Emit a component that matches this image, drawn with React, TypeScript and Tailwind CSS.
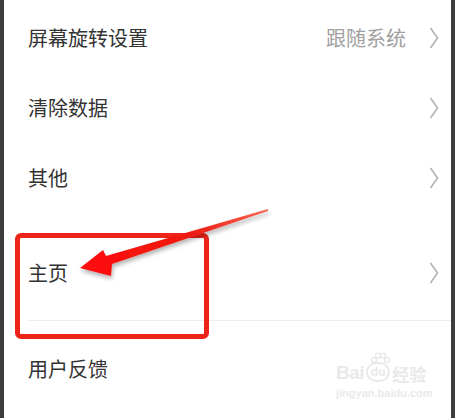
import React from 'react';

const font = { fontFamily: '"Noto Sans CJK SC", "Noto Sans", sans-serif' };

function Chevron() {
  return (
    <svg width="10" height="24" viewBox="0 0 10 24" className="shrink-0">
      <polyline points="1.5,2 8.5,12 1.5,22" fill="none" stroke="#b8b8b8" strokeWidth="1.8" strokeLinejoin="miter" />
    </svg>
  );
}

interface RowProps {
  label: string;
  value?: string;
  arrow?: boolean;
  className: string;
}

function Row({ label, value, arrow = true, className }: RowProps) {
  return (
    <div className={`flex items-center pl-[24px] pr-[12px] ${className}`}>
      <span className="flex-1 text-[20px] text-[#333333]">{label}</span>
      {value && <span className="mr-[23px] text-[20px] text-[#a0a0a0]">{value}</span>}
      {arrow && <Chevron />}
    </div>
  );
}

export default function App() {
  return (
    <div className="relative w-[455px] h-[418px] overflow-hidden bg-[#3d3d3d] flex" style={font}>
      <div className="mx-[4px] flex-1 bg-white flex flex-col pt-[3px]">
        <Row label="屏幕旋转设置" value="跟随系统" className="h-[70px]" />
        <Row label="清除数据" className="h-[70px]" />
        <Row label="其他" className="h-[70px]" />
        <Row label="主页" className="h-[107px] pt-[12px]" />
        <div className="ml-[24px] h-px bg-[#eeeeee]" />
        <Row label="用户反馈" arrow={false} className="h-[96px]" />
      </div>

      {/* red highlight box */}
      <div className="absolute left-[15px] top-[233px] w-[194px] h-[106px] border-[5px] border-[#ee2418] rounded-[6px]" />

      {/* red arrow */}
      <svg className="absolute left-0 top-0" width="455" height="418" viewBox="0 0 455 418">
        <defs>
          <linearGradient id="arr" x1="268" y1="210" x2="80" y2="268" gradientUnits="userSpaceOnUse">
            <stop offset="0" stopColor="#f56a5a" />
            <stop offset="0.4" stopColor="#ee1c12" />
            <stop offset="1" stopColor="#ff0a0a" />
          </linearGradient>
          <filter id="sh" x="-20%" y="-20%" width="140%" height="160%">
            <feDropShadow dx="1" dy="3" stdDeviation="2" floodColor="#000" floodOpacity="0.3" />
          </filter>
        </defs>
        <polygon
          points="80,268 103,250 106,256 268,209 268,211 112,264 111,276"
          fill="url(#arr)"
          filter="url(#sh)"
        />
      </svg>

      {/* watermark */}
      <div className="absolute left-[336px] top-[362px] flex flex-col items-start text-[#e9e9e9]">
        <div className="flex items-end leading-none">
          <span className="text-[19px] font-bold tracking-tight" style={{ fontFamily: '"Liberation Sans", sans-serif' }}>Bai</span>
          <span className="relative mx-[2px] flex items-center justify-center w-[24px] h-[20px] rounded-full border-2 border-[#e9e9e9] text-[12px] font-bold" style={{ fontFamily: '"Liberation Sans", sans-serif' }}>
            du
            <svg className="absolute -top-[12px] left-[2px]" width="20" height="12" viewBox="0 0 20 12">
              <circle cx="4" cy="8" r="2.5" fill="none" stroke="#e4e4e4" strokeWidth="1.2" />
              <circle cx="8" cy="3.5" r="2.5" fill="none" stroke="#e4e4e4" strokeWidth="1.2" />
              <circle cx="13" cy="3.5" r="2.5" fill="none" stroke="#e4e4e4" strokeWidth="1.2" />
              <circle cx="17" cy="8" r="2.5" fill="none" stroke="#e4e4e4" strokeWidth="1.2" />
            </svg>
          </span>
          <span className="text-[17px] font-bold">经验</span>
        </div>
        <span className="mt-[3px] text-[11px] font-bold" style={{ fontFamily: '"Liberation Sans", sans-serif' }}>jingyan.baidu.com</span>
      </div>
    </div>
  );
}
